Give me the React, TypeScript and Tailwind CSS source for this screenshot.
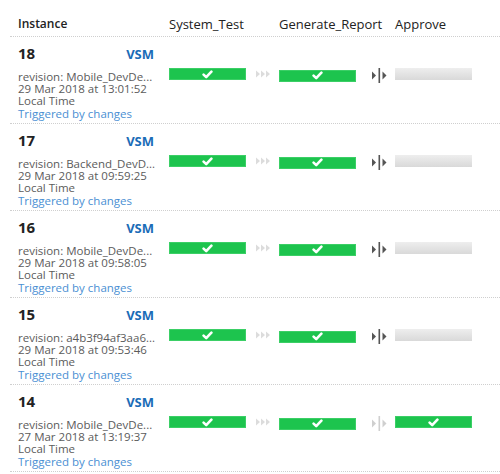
const rows = [
  { id: "18", rev: "revision: Mobile_DevDe...", date: "29 Mar 2018 at 13:01:52", approved: false },
  { id: "17", rev: "revision: Backend_DevD...", date: "29 Mar 2018 at 09:59:25", approved: false },
  { id: "16", rev: "revision: Mobile_DevDe...", date: "29 Mar 2018 at 09:58:05", approved: false },
  { id: "15", rev: "revision: a4b3f94af3aa6...", date: "29 Mar 2018 at 09:53:46", approved: false },
  { id: "14", rev: "revision: Mobile_DevDe...", date: "27 Mar 2018 at 13:19:37", approved: true },
];

const PassBar = () => (
  <div className="flex h-[12px] w-[77px] items-center justify-center bg-[#1dc44e] shadow-[inset_0_0_0_1px_#3bcf66]">
    <svg width="11" height="9" viewBox="0 0 11 9">
      <path d="M1.6 4.6 L4.2 7.1 L9.4 1.7" fill="none" stroke="#fff" strokeWidth="2.6" strokeLinecap="round" strokeLinejoin="round" />
    </svg>
  </div>
);

const PendingBar = () => (
  <div className="h-[12px] w-[77px] bg-gradient-to-b from-[#eeeeee] to-[#d9d9d9]" />
);

const Arrows = () => (
  <svg width="14" height="8" viewBox="0 0 14 8" className="ml-[10px]">
    <path d="M0 0.5 L4 4 L0 7.5Z M5 0.5 L9 4 L5 7.5Z M10 0.5 L14 4 L10 7.5Z" fill="#dcdcdc" />
  </svg>
);

const Gate = ({ open }: { open: boolean }) => {
  const c = open ? "#cfcfcf" : "#555555";
  return (
    <svg width="15" height="15" viewBox="0 0 15 15" className="ml-[16px]">
      <path d="M0 3.5 L4 7.5 L0 11.5Z" fill={c} />
      <rect x="6.5" y="0" width="1.6" height="15" fill={c} />
      <path d="M10.5 3.5 L14.5 7.5 L10.5 11.5Z" fill={c} />
    </svg>
  );
};

export default function App() {
  return (
    <div className="min-h-[474px] bg-white pl-[10px] font-['Open_Sans',sans-serif] text-[#222]">
      <div className="grid h-[37px] grid-cols-[152px_110px_115px_1fr] border-b border-dotted border-[#cfcfcf] pt-[16px] text-[13px] leading-[16px]">
        <div className="pl-2 text-[12px] font-semibold">Instance</div>
        <div className="pl-[7px]">System_Test</div>
        <div className="pl-[7px]">Generate_Report</div>
        <div className="pl-[8px]">Approve</div>
      </div>

      {rows.map((r) => (
        <div
          key={r.id}
          className="grid h-[87px] grid-cols-[152px_110px_115px_1fr] border-b border-dotted border-[#cfcfcf]"
        >
          <div className="px-2 pt-[6px]">
            <div className="flex items-baseline justify-between">
              <span className="text-[15px] font-bold leading-[20px]">{r.id}</span>
              <span className="text-[13px] font-bold leading-[20px] text-[#1b6cb7]">VSM</span>
            </div>
            <div className="mt-[7px] whitespace-nowrap text-[11.5px] leading-[12.2px] text-[#5b5b5b]">
              <div>{r.rev}</div>
              <div>{r.date}</div>
              <div>Local Time</div>
              <div className="mt-[0.5px] text-[#4a8fd3]">Triggered by changes</div>
            </div>
          </div>
          <div className="flex items-center self-start pl-[7px] pt-[31px]">
            <PassBar />
            <Arrows />
          </div>
          <div className="flex items-center self-start pl-[7px] pt-[31px]">
            <PassBar />
            <Gate open={r.approved} />
          </div>
          <div className="flex items-center self-start pl-[8px] pt-[31px]">
            {r.approved ? <PassBar /> : <PendingBar />}
          </div>
        </div>
      ))}
    </div>
  );
}
